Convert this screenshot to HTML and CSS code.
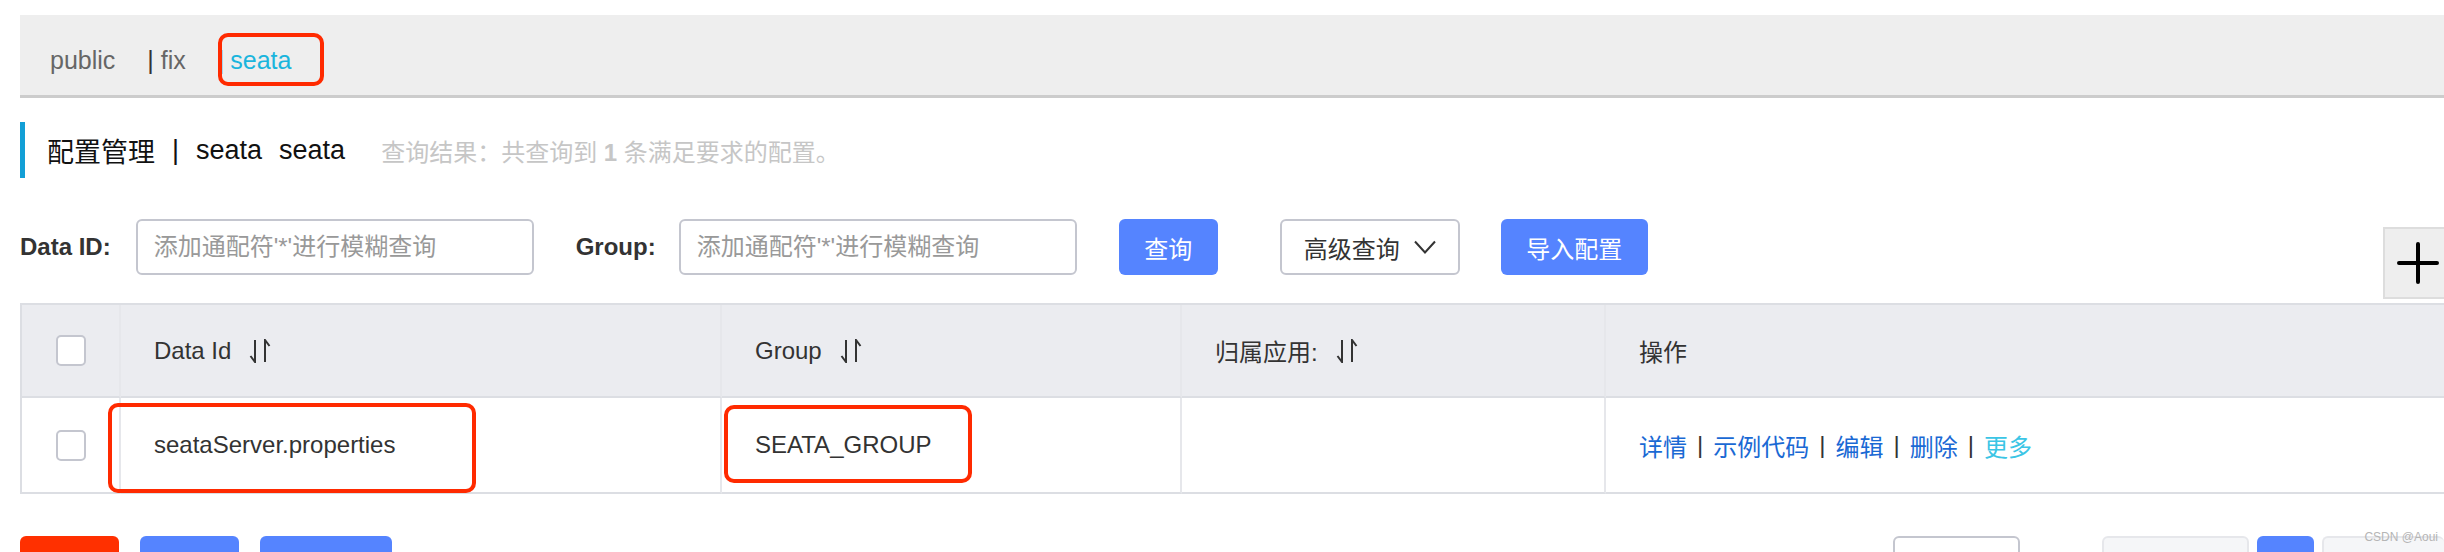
FILE: index.html
```html
<!DOCTYPE html>
<html lang="zh-CN">

<head>
    <meta charset="UTF-8">
    <meta name="viewport" content="width=device-width, initial-scale=1.0">
    <title>配置管理</title>
    <link rel="stylesheet" href="styles.css">
</head>

<body>
    <div class="tab-bar">
        <span class="tab">public</span>
        <span class="tab"><span class="bar">|</span> fix</span>
        <span class="tab"><span class="bar">|</span><span class="tab-on mark">seata</span></span>
    </div>

    <div class="page-title">
        <span class="title-main">配置管理</span>
        <span class="title-sep">|</span>
        <span class="title-main">seata</span>
        <span class="title-main title-ns">seata</span>
        <span class="title-result">查询结果：共查询到 <b>1</b> 条满足要求的配置。</span>
    </div>

    <div class="search">
        <label class="search-label">Data ID:</label>
        <input type="text" class="search-input" placeholder="添加通配符'*'进行模糊查询">
        <label class="search-label group-label">Group:</label>
        <input type="text" class="search-input" placeholder="添加通配符'*'进行模糊查询">
        <button class="btn btn-blue btn-query">查询</button>
        <button class="btn btn-line btn-adv">高级查询
            <svg width="22" height="14" viewBox="0 0 22 14"><polyline points="1,1.5 11,12.5 21,1.5" fill="none" stroke="#333" stroke-width="2"/></svg>
        </button>
        <button class="btn btn-blue btn-import">导入配置</button>
        <div class="plus-box">
            <svg width="42" height="42" viewBox="0 0 42 42"><path d="M21 2 V40 M2 21 H40" stroke="#000" stroke-width="4" stroke-linecap="round"/></svg>
        </div>
    </div>

    <div class="grid">
        <div class="cell head cell-check"><span class="check"></span></div>
        <div class="cell head">Data Id
            <svg class="sort" width="22" height="24" viewBox="0 0 22 24"><path d="M6 1 V23 L1.5 17 M16 23 V1 L20.5 7" fill="none" stroke="#333" stroke-width="2"/></svg>
        </div>
        <div class="cell head">Group
            <svg class="sort" width="22" height="24" viewBox="0 0 22 24"><path d="M6 1 V23 L1.5 17 M16 23 V1 L20.5 7" fill="none" stroke="#333" stroke-width="2"/></svg>
        </div>
        <div class="cell head">归属应用:
            <svg class="sort" width="22" height="24" viewBox="0 0 22 24"><path d="M6 1 V23 L1.5 17 M16 23 V1 L20.5 7" fill="none" stroke="#333" stroke-width="2"/></svg>
        </div>
        <div class="cell head cell-last">操作</div>

        <div class="cell row cell-check"><span class="check"></span></div>
        <div class="cell row"><span class="hl hl-id"></span>seataServer.properties</div>
        <div class="cell row"><span class="hl hl-group"></span>SEATA_GROUP</div>
        <div class="cell row"></div>
        <div class="cell row cell-last">
            <a class="act">详情</a><span class="act-sep">|</span><a class="act">示例代码</a><span class="act-sep">|</span><a class="act">编辑</a><span class="act-sep">|</span><a class="act">删除</a><span class="act-sep">|</span><a class="act act-more">更多</a>
        </div>
    </div>

    <div class="footer">
        <div class="footer-left">
            <span class="fbtn fbtn-red"></span>
            <span class="fbtn fbtn-blue"></span>
            <span class="fbtn fbtn-blue fbtn-wide"></span>
        </div>
        <div class="footer-right">
            <span class="pbtn pbtn-size"></span>
            <span class="pbtn pbtn-prev"></span>
            <span class="pbtn pbtn-cur"></span>
            <span class="pbtn pbtn-next"></span>
        </div>
    </div>

    <div class="watermark">CSDN @Aoui</div>
</body>

</html>
```

FILE: styles.css
```css
* {
    box-sizing: border-box;
    margin: 0;
}

html,
body {
    overflow: hidden;
    height: 552px;
}

body {
    position: relative;
    font-family: "Liberation Sans", "Noto Sans CJK SC", sans-serif;
    color: #333;
    background-color: #fff;
}

/* 命名空间 */
.tab-bar {
    display: flex;
    align-items: center;
    height: 83px;
    margin: 15px 0 0 20px;
    padding: 10px 0 0 30px;
    background-color: #eeeeee;
    border-bottom: 3px solid #cccccc;
    font-size: 25px;
    color: #666;
}

.tab {
    margin-right: 32px;
    line-height: 30px;
}

.bar {
    color: #333;
}

.tab-on {
    color: #1ab5dd;
    margin-left: 6px;
}

.mark {
    position: relative;
}

.mark::after {
    content: '';
    position: absolute;
    left: -12px;
    right: -33px;
    top: -13px;
    bottom: -12px;
    border: 4px solid #ff2a00;
    border-radius: 10px;
}

/* 标题 */
.page-title {
    display: flex;
    align-items: center;
    height: 56px;
    margin: 24px 0 0 20px;
    padding-left: 22px;
    border-left: 5px solid #129fd6;
    font-size: 27px;
    color: #111;
}

.title-sep {
    margin: 0 17px;
}

.title-ns {
    margin-left: 17px;
}

.title-result {
    margin-left: 36px;
    font-size: 24px;
    color: #c6c6c6;
}

/* 搜索 */
.search {
    display: flex;
    align-items: center;
    margin: 41px 0 0 20px;
    height: 56px;
}

.search-label {
    font-size: 24px;
    font-weight: bold;
    color: #333;
    margin-right: 25px;
}

.group-label {
    margin-left: 42px;
    margin-right: 23px;
}

.search-input {
    width: 398px;
    height: 56px;
    padding-left: 16px;
    border: 2px solid #c4c6cf;
    border-radius: 6px;
    font-family: "Liberation Sans", "Noto Sans CJK SC", sans-serif;
    font-size: 24px;
    outline: none;
}

.search-input::placeholder {
    color: #999;
}

.btn {
    height: 56px;
    border-radius: 6px;
    font-family: "Liberation Sans", "Noto Sans CJK SC", sans-serif;
    font-size: 24px;
}

.btn-blue {
    background-color: #5584ff;
    border: none;
    color: #fff;
}

.btn-line {
    background-color: #fff;
    border: 2px solid #c4c6cf;
    color: #333;
}

.btn-query {
    width: 99px;
    margin-left: 42px;
}

.btn-adv {
    display: flex;
    align-items: center;
    justify-content: center;
    gap: 14px;
    width: 180px;
    margin-left: 62px;
}

.btn-import {
    width: 147px;
    margin-left: 41px;
}

.plus-box {
    position: absolute;
    top: 227px;
    left: 2383px;
    width: 61px;
    height: 72px;
    display: flex;
    align-items: center;
    padding-left: 12px;
    background-color: #eeeeee;
    border: 2px solid #dddddd;
    border-right: none;
}

/* 列表 */
.grid {
    display: grid;
    grid-template-columns: 99px 601px 460px 424px 1fr;
    margin: 28px 0 0 20px;
    border-top: 2px solid #dcdee3;
    border-left: 2px solid #dcdee3;
    font-size: 24px;
    color: #333;
}

.cell {
    position: relative;
    display: flex;
    align-items: center;
    padding-left: 33px;
    border-right: 2px solid #e6e7eb;
    border-bottom: 2px solid #dcdee3;
}

.head {
    height: 93px;
    background-color: #ebecf0;
}

.row {
    height: 96px;
}

.cell-check {
    justify-content: center;
    padding-left: 0;
}

.cell-last {
    border-right: none;
}

.check {
    width: 30px;
    height: 31px;
    background-color: #fff;
    border: 2px solid #c4c6cf;
    border-radius: 5px;
}

.sort {
    margin-left: 18px;
}

.hl {
    position: absolute;
    border: 4px solid #ff2a00;
    border-radius: 10px;
}

.hl-id {
    left: -13px;
    top: 5px;
    width: 368px;
    height: 90px;
}

.hl-group {
    left: 2px;
    top: 7px;
    width: 248px;
    height: 78px;
}

.act {
    color: #1a69d4;
}

.act-more {
    color: #3bc5e5;
}

.act-sep {
    margin: 0 10px;
    color: #333;
}

/* 底部 */
.footer {
    display: flex;
    justify-content: space-between;
    margin: 42px 0 0 20px;
}

.footer-left,
.footer-right {
    display: flex;
}

.fbtn {
    width: 99px;
    height: 56px;
    margin-right: 21px;
    border-radius: 6px;
}

.fbtn-red {
    background-color: #ff3000;
}

.fbtn-blue {
    background-color: #5584ff;
}

.fbtn-wide {
    width: 132px;
}

.pbtn {
    height: 56px;
    border-radius: 6px;
}

.pbtn-size {
    width: 127px;
    margin-right: 82px;
    border: 2px solid #c4c6cf;
}

.pbtn-prev {
    width: 147px;
    margin-right: 8px;
    background-color: #f5f6f8;
    border: 2px solid #e6e7eb;
}

.pbtn-cur {
    width: 57px;
    margin-right: 8px;
    background-color: #5584ff;
}

.pbtn-next {
    width: 122px;
    background-color: #f5f6f8;
    border: 2px solid #e6e7eb;
    border-right: none;
}

.watermark {
    position: absolute;
    top: 530px;
    right: 6px;
    font-size: 12px;
    color: #b5b5b5;
}
```
